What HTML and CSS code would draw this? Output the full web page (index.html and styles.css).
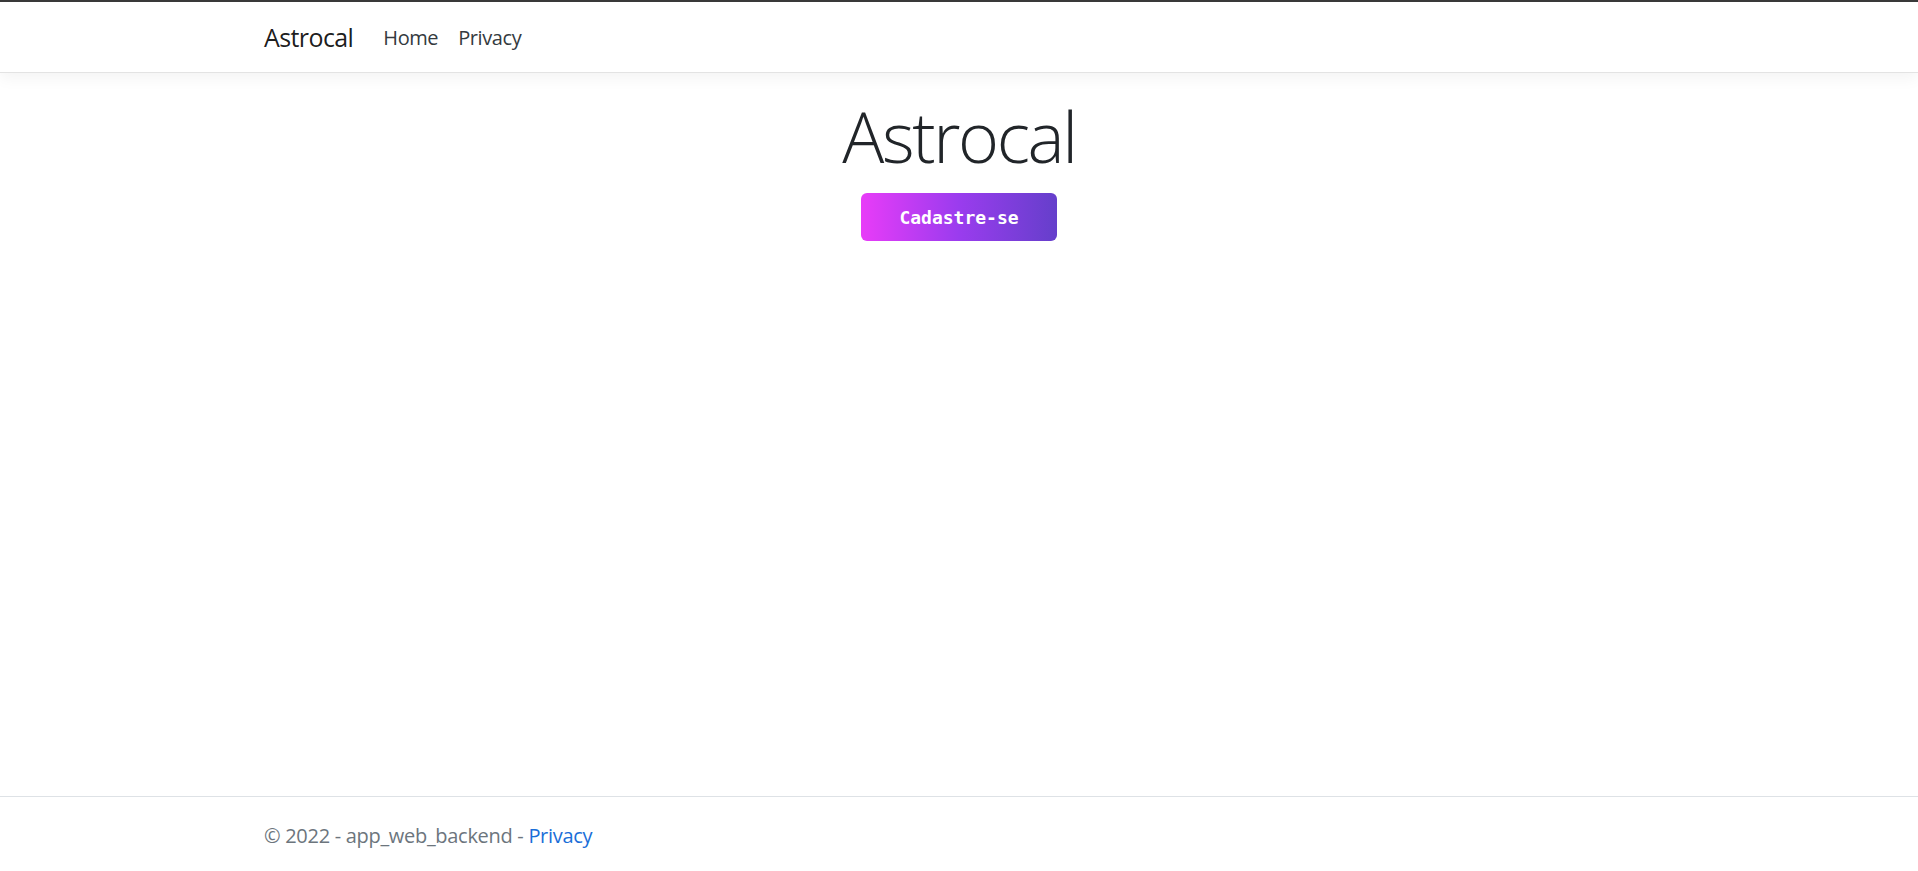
FILE: index.html
```html
<!DOCTYPE html>
<html lang="pt-br">
<head>
<meta charset="utf-8">
<title>Astrocal</title>
<link rel="stylesheet" href="styles.css">
</head>
<body>
<header class="site-header">
  <nav class="navbar">
    <div class="container navbar-inner">
      <a class="brand" href="#">Astrocal</a>
      <ul class="nav-list">
        <li><a class="nav-link" href="#">Home</a></li>
        <li><a class="nav-link" href="#">Privacy</a></li>
      </ul>
    </div>
  </nav>
</header>
<main class="container main">
  <div class="hero">
    <h1 class="display">Astrocal</h1>
    <button class="cta" type="button">Cadastre-se</button>
  </div>
</main>
<footer class="footer">
  <div class="container footer-inner">&copy; 2022 - app_web_backend - <a class="footer-link" href="#">Privacy</a></div>
</footer>
</body>
</html>
```

FILE: styles.css
```css
* { box-sizing: border-box; }
html, body { margin: 0; padding: 0; }
body {
  min-height: 100vh;
  display: flex;
  flex-direction: column;
  font-family: "Open Sans", "Noto Sans", sans-serif;
  font-size: 20px;
  color: #212529;
  background: #fff;
}
a { text-decoration: none; }
.container {
  width: 100%;
  max-width: 1390px;
  margin: 0 auto;
}
.site-header { border-top: 2px solid #3a3a3a; }
.navbar {
  height: 71px;
  border-bottom: 1px solid #e3e3e3;
  box-shadow: 0 5px 15px rgba(0, 0, 0, 0.05);
  background: #fff;
}
.navbar-inner {
  height: 70px;
  display: flex;
  align-items: center;
}
.brand {
  font-size: 25px;
  color: rgba(0, 0, 0, 0.9);
  margin-right: 20px;
  letter-spacing: -0.6px;
}
.nav-list {
  list-style: none;
  margin: 0;
  padding: 0;
  display: flex;
}
.nav-link {
  display: block;
  padding: 10px 10px;
  color: #343a40;
  font-size: 20px;
  letter-spacing: -0.4px;
}
.main { flex: 1; }
.hero {
  display: flex;
  flex-direction: column;
  align-items: center;
  padding-top: 21px;
}
.display {
  margin: 0;
  font-size: 70px;
  font-weight: 300;
  line-height: 84px;
  letter-spacing: -2.4px;
  color: #212529;
}
.cta {
  margin-top: 15px;
  width: 196px;
  height: 48px;
  border: 0;
  border-radius: 6px;
  background: linear-gradient(90deg, #e83cf8 0%, #9a3cee 50%, #653fcb 100%);
  color: #fff;
  font-family: "DejaVu Sans Mono", "Liberation Mono", monospace;
  font-weight: bold;
  font-size: 18px;
  cursor: pointer;
}
.footer {
  height: 75px;
  border-top: 1px solid #dee2e6;
  color: #6c757d;
  font-size: 20px;
  letter-spacing: -0.3px;
}
.footer-inner {
  padding-top: 4px;
  line-height: 70px;
}
.footer-link { color: #1a6ed8; }
```
